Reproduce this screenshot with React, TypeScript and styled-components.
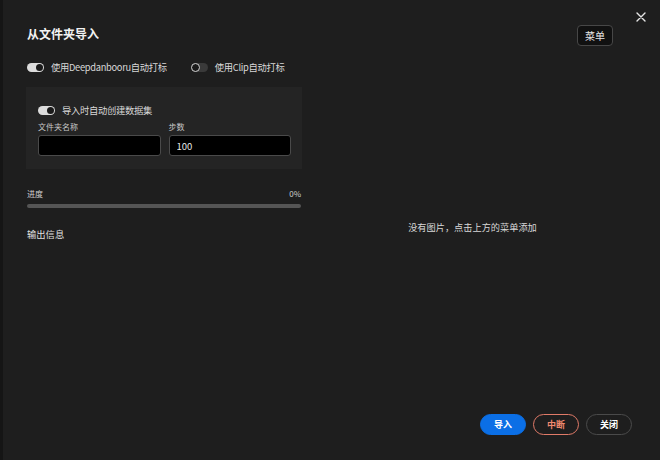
import React, { useState } from 'react';
import styled, { createGlobalStyle } from 'styled-components';

const GlobalStyle = createGlobalStyle`
  html, body {
    margin: 0;
    padding: 0;
    background: #1e1e1e;
  }
  * {
    box-sizing: border-box;
  }
`;

const FONT = `"Noto Sans CJK SC", "Noto Sans", sans-serif`;

const App = () => {
  const [autoDanbooru, setAutoDanbooru] = useState(true);
  const [autoClip, setAutoClip] = useState(false);
  const [autoDataset, setAutoDataset] = useState(true);
  const [folderName, setFolderName] = useState('');
  const [steps, setSteps] = useState('100');
  const progress = 0;

  return (
    <>
      <GlobalStyle />
      <Modal>
        <CloseButton aria-label="close">
          <svg width="10" height="10" viewBox="0 0 10 10">
            <path d="M1 1 L9 9 M9 1 L1 9" stroke="#e6e6e6" strokeWidth="1.4" strokeLinecap="round" />
          </svg>
        </CloseButton>
        <Header>
          <Title>从文件夹导入</Title>
          <MenuButton>菜单</MenuButton>
        </Header>
        <Body>
          <LeftColumn>
            <SwitchRow>
              <SwitchItem onClick={() => setAutoDanbooru(!autoDanbooru)}>
                <Switch on={autoDanbooru} />
                <SwitchText>使用Deepdanbooru自动打标</SwitchText>
              </SwitchItem>
              <SwitchItem onClick={() => setAutoClip(!autoClip)}>
                <Switch on={autoClip} />
                <SwitchText>使用Clip自动打标</SwitchText>
              </SwitchItem>
            </SwitchRow>
            <Panel>
              <SwitchItem onClick={() => setAutoDataset(!autoDataset)}>
                <Switch on={autoDataset} />
                <SwitchText>导入时自动创建数据集</SwitchText>
              </SwitchItem>
              <FieldGrid>
                <Field>
                  <FieldLabel>文件夹名称</FieldLabel>
                  <Input value={folderName} onChange={(e) => setFolderName(e.target.value)} />
                </Field>
                <Field>
                  <FieldLabel>步数</FieldLabel>
                  <Input value={steps} onChange={(e) => setSteps(e.target.value)} />
                </Field>
              </FieldGrid>
            </Panel>
            <ProgressHead>
              <SmallText>进度</SmallText>
              <SmallText>{progress}%</SmallText>
            </ProgressHead>
            <ProgressTrack>
              <ProgressFill style={{ width: `${progress}%` }} />
            </ProgressTrack>
            <OutputTitle>输出信息</OutputTitle>
          </LeftColumn>
          <RightColumn>
            <EmptyText>没有图片，点击上方的菜单添加</EmptyText>
          </RightColumn>
        </Body>
        <Footer>
          <PillButton variant="primary">导入</PillButton>
          <PillButton variant="danger">中断</PillButton>
          <PillButton variant="default">关闭</PillButton>
        </Footer>
      </Modal>
    </>
  );
};

export default App;

const Modal = styled.div`
  position: relative;
  width: 660px;
  height: 460px;
  background: #1e1e1e;
  border-left: 3px solid #151515;
  padding: 25px 28px 25px 24px;
  display: flex;
  flex-direction: column;
  font-family: ${FONT};
  color: #e8e8e8;
`;

const CloseButton = styled.button`
  position: absolute;
  top: 12px;
  right: 14px;
  width: 10px;
  height: 10px;
  padding: 0;
  border: none;
  background: transparent;
  display: flex;
  cursor: pointer;
`;

const Header = styled.div`
  display: flex;
  justify-content: space-between;
  align-items: center;
  height: 21px;
  margin-right: 19px;
`;

const Title = styled.div`
  font-size: 12px;
  font-weight: 700;
  color: #f2f2f2;
  margin-top: -5px;
`;

const MenuButton = styled.button`
  width: 36px;
  height: 21px;
  padding: 0;
  background: #111111;
  border: 1px solid #474747;
  border-radius: 4px;
  color: #e6e6e6;
  font-family: ${FONT};
  font-size: 10px;
  cursor: pointer;
`;

const Body = styled.div`
  flex: 1;
  display: grid;
  grid-template-columns: 274px 1fr;
  column-gap: 12px;
`;

const LeftColumn = styled.div`
  display: flex;
  flex-direction: column;
`;

const SwitchRow = styled.div`
  display: flex;
  gap: 24px;
  margin-top: 15px;
`;

const SwitchItem = styled.div`
  display: flex;
  align-items: center;
  gap: 7px;
  height: 12px;
  cursor: pointer;
`;

const Switch = styled.span<{ on: boolean }>`
  position: relative;
  width: 17px;
  height: 9px;
  border-radius: 5px;
  background: ${(p) => (p.on ? '#dcdcdc' : '#3a3a3a')};
  flex-shrink: 0;

  &::after {
    content: '';
    position: absolute;
    top: ${(p) => (p.on ? '1px' : '0')};
    left: ${(p) => (p.on ? '9px' : '0')};
    width: ${(p) => (p.on ? '7px' : '9px')};
    height: ${(p) => (p.on ? '7px' : '9px')};
    border-radius: 50%;
    box-sizing: border-box;
    background: #1a1a1a;
    border: ${(p) => (p.on ? 'none' : '1.5px solid #d0d0d0')};
  }
`;

const SwitchText = styled.span`
  font-size: 9.3px;
  letter-spacing: -0.3px;
  color: #d8d8d8;
  white-space: nowrap;
`;

const Panel = styled.div`
  margin-top: 14px;
  margin-left: -1px;
  width: 276px;
  height: 82px;
  background: #242424;
  padding: 17px 11px 12px 12px;
  display: flex;
  flex-direction: column;
`;

const FieldGrid = styled.div`
  display: grid;
  grid-template-columns: 1fr 1fr;
  column-gap: 8px;
  margin-top: 5px;
`;

const Field = styled.div`
  display: flex;
  flex-direction: column;
`;

const FieldLabel = styled.div`
  font-size: 8px;
  line-height: 11px;
  color: #c8c8c8;
  margin-bottom: 3px;
`;

const Input = styled.input`
  height: 21px;
  width: 100%;
  background: #000;
  border: 1px solid #4a4a4a;
  border-radius: 3px;
  color: #e8e8e8;
  font-family: ${FONT};
  font-size: 9.5px;
  padding: 0 7px;
  outline: none;
`;

const ProgressHead = styled.div`
  display: flex;
  justify-content: space-between;
  margin-top: 19px;
`;

const SmallText = styled.span`
  font-size: 8px;
  line-height: 11px;
  color: #cfcfcf;
`;

const ProgressTrack = styled.div`
  margin-top: 5px;
  height: 4px;
  border-radius: 2px;
  background: #555555;
  overflow: hidden;
`;

const ProgressFill = styled.div`
  height: 100%;
  background: #1677ff;
`;

const OutputTitle = styled.div`
  margin-top: 20px;
  font-size: 9.3px;
  line-height: 13px;
  color: #e0e0e0;
`;

const RightColumn = styled.div`
  display: flex;
  justify-content: center;
  padding-top: 175px;
`;

const EmptyText = styled.div`
  font-size: 9.2px;
  line-height: 13px;
  color: #d8d8d8;
  height: 13px;
`;

const Footer = styled.div`
  display: flex;
  justify-content: flex-end;
  gap: 7px;
`;

const PillButton = styled.button<{ variant: 'primary' | 'danger' | 'default' }>`
  width: 46px;
  height: 21px;
  padding: 0;
  border-radius: 11px;
  font-family: ${FONT};
  font-size: 9px;
  font-weight: 700;
  cursor: pointer;
  background: ${(p) => (p.variant === 'primary' ? '#0b6fe6' : 'transparent')};
  border: 1.5px solid
    ${(p) => (p.variant === 'primary' ? '#0b6fe6' : p.variant === 'danger' ? '#e07a68' : '#4a4a4a')};
  color: ${(p) => (p.variant === 'danger' ? '#f08a70' : '#ffffff')};
`;
